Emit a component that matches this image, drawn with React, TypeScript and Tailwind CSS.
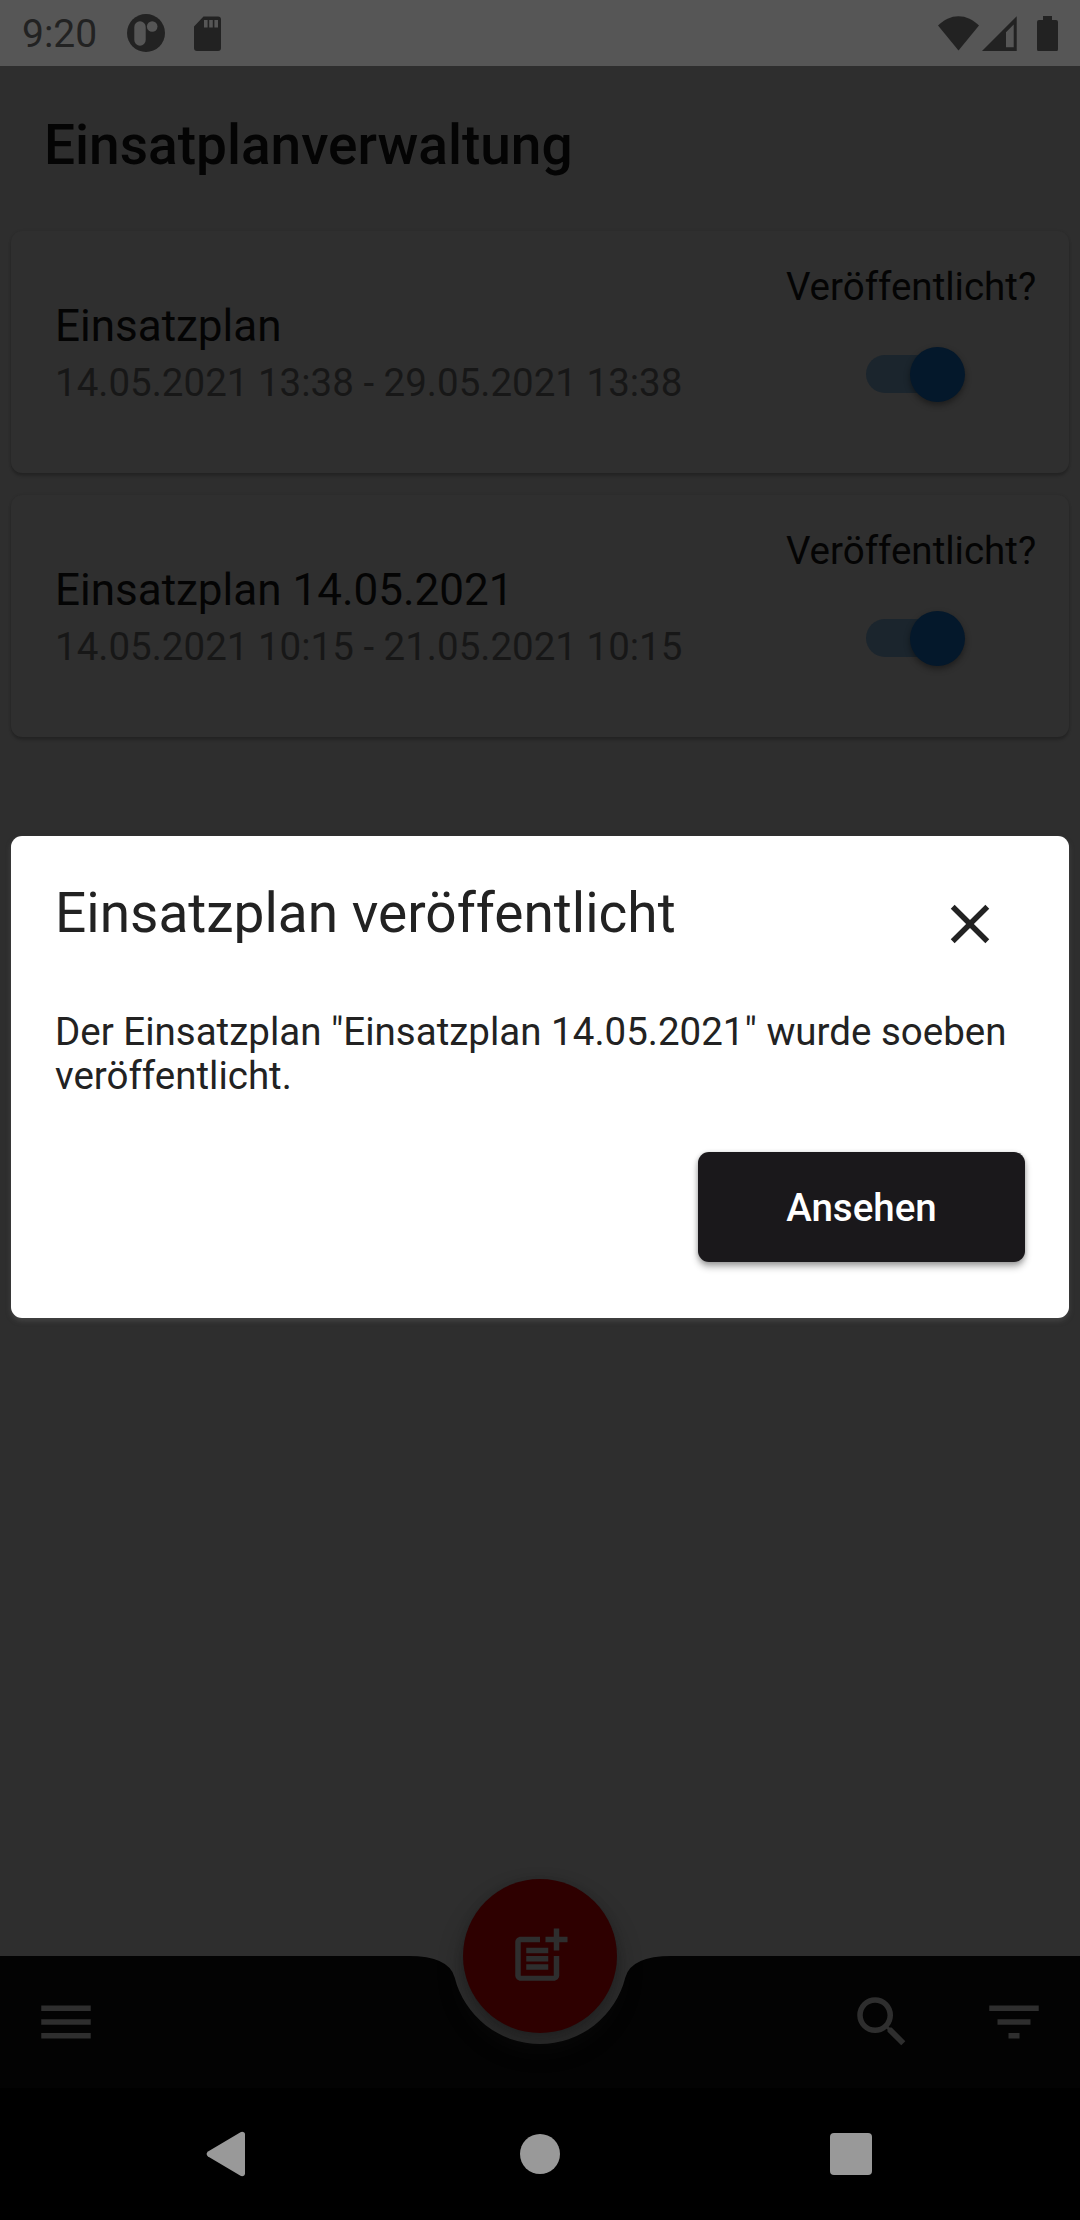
import type { ReactNode } from "react";
import { MdClose, MdFilterList, MdMenu, MdPostAdd, MdSearch } from "react-icons/md";

type Plan = { name: string; period: string };

const plans: Plan[] = [
  { name: "Einsatzplan", period: "14.05.2021 13:38 - 29.05.2021 13:38" },
  { name: "Einsatzplan 14.05.2021", period: "14.05.2021 10:15 - 21.05.2021 10:15" },
];

function StatusBar() {
  return (
    <header className="flex h-[66px] shrink-0 items-center bg-[#565656] px-[22px] text-[#222222]">
      <span className="w-[105px] pt-[3px] text-[39px] leading-[63px]">9:20</span>
      <svg className="h-[38px] w-[38px]" viewBox="0 0 38 38">
        <circle cx="19" cy="19" r="19" fill="#222222" />
        <rect x="7.3" y="7.3" width="11.4" height="24.4" rx="5.7" fill="#565656" />
        <circle cx="25.2" cy="12.5" r="5.3" fill="#565656" />
      </svg>
      <svg className="ml-[28px] h-[35px] w-[28px]" viewBox="0 0 28 35">
        <path d="M10.5 0.5H25a3 3 0 0 1 3 3V32a3 3 0 0 1-3 3H4a3 3 0 0 1-3-3V10.5z" fill="#222222" />
        <path d="M11 4h3.6v7.5H11zM16.2 4h3.6v7.5h-3.6zM21.4 4H25v7.5h-3.6z" fill="#565656" />
      </svg>
      <svg className="ml-auto h-[35px] w-[120px]" viewBox="0 0 120 35" fill="#222222">
        <path d="M0 9.6C5.8 3.6 13 0.2 20.5 0.2S35.2 3.6 41 9.6L20.5 34.5z" />
        <path fillRule="evenodd" d="M44 35 78.7 0.3V35zM68 16.3V31.3h7.7V8.6z" />
        <path d="M105 0h9v4h4a2 2 0 0 1 2 2v27a2.5 2.5 0 0 1-2.5 2.5h-16A2.5 2.5 0 0 1 99 33V6a2 2 0 0 1 2-2h4z" />
      </svg>
    </header>
  );
}

function Switch() {
  return (
    <div className="flex h-[38px] w-[91px] items-center justify-end rounded-full bg-[#1b252d]">
      <div className="-mr-[8px] h-[55px] w-[55px] shrink-0 rounded-full bg-[#04182b] shadow-[0_3px_6px_rgba(0,0,0,0.4)]" />
    </div>
  );
}

function PlanCard({ plan }: { plan: Plan }) {
  return (
    <article className="flex h-[242px] justify-between rounded-[11px] bg-[#2f2f2f] pl-[44px] pr-[33px] shadow-[0_3px_3px_rgba(0,0,0,0.2),0_0_3px_rgba(0,0,0,0.1)]">
      <div className="pt-[69px]">
        <h2 className="text-[44px] leading-[52px] text-[#040404]">{plan.name}</h2>
        <p className="mt-[8px] text-[38.5px] leading-[45px] text-[#171717]">{plan.period}</p>
      </div>
      <div className="flex w-[250px] flex-col items-center pt-[33px]">
        <span className="mb-[46px] whitespace-nowrap text-[38.5px] leading-[45px] text-[#040404]">
          Veröffentlicht?
        </span>
        <Switch />
      </div>
    </article>
  );
}

function IconButton({ label, children }: { label: string; children: ReactNode }) {
  return (
    <button aria-label={label} className="flex h-[132px] w-[132px] items-center justify-center text-[66px] text-[#2e2e2e]">
      {children}
    </button>
  );
}

function BottomBar() {
  return (
    <div className="relative h-[132px] shrink-0">
      <svg className="absolute inset-0 h-full w-full" viewBox="0 0 1080 132">
        <path
          d="M0 0H408Q449.25 0 454.67 21.5A88 88 0 0 0 625.33 21.5Q630.75 0 672 0H1080V132H0z"
          fill="#030303"
        />
      </svg>
      <div className="relative flex">
        <IconButton label="Menü">
          <MdMenu />
        </IconButton>
        <div className="flex-1" />
        <IconButton label="Suchen">
          <MdSearch />
        </IconButton>
        <IconButton label="Filtern">
          <MdFilterList />
        </IconButton>
      </div>
      <button
        aria-label="Einsatzplan hinzufügen"
        className="absolute -top-[77px] left-[463px] flex h-[154px] w-[154px] items-center justify-center rounded-full bg-[#2e0000] text-[66px] text-[#2e2e2e] shadow-[0_14px_24px_rgba(20,20,20,0.4),0_2px_8px_rgba(20,20,20,0.25)]"
      >
        <MdPostAdd />
      </button>
    </div>
  );
}

function SystemNavigation() {
  return (
    <nav className="flex h-[132px] shrink-0 items-center bg-black pl-[206px] pr-[208px] text-[#999999]">
      <svg className="h-[46px] w-[40px]" viewBox="0 0 40 46" fill="currentColor">
        <path d="M2 20.4 34.5 1.2Q36.5 0.3 38.2 1.6Q39 2.3 39 3.5V42.5Q39 43.7 38.2 44.4Q36.5 45.7 34.5 44.8L2 25.6Q-0.8 23 2 20.4z" />
      </svg>
      <div className="ml-[274px] h-[40px] w-[40px] rounded-full bg-[#999999]" />
      <div className="ml-auto h-[42px] w-[42px] rounded-[4px] bg-[#999999]" />
    </nav>
  );
}

function PublishedDialog() {
  return (
    <section
      role="dialog"
      aria-modal="true"
      className="absolute left-[11px] right-[11px] top-[836px] flex h-[482px] flex-col rounded-[11px] bg-white px-[44px] text-[#222222] shadow-[0_3px_5px_rgba(90,90,90,0.5)]"
    >
      <div className="flex items-start justify-between">
        <h2 className="mt-[44px] text-[55px] leading-[66px]">Einsatzplan veröffentlicht</h2>
        <button aria-label="Schließen" className="mr-[22px] mt-[55px] text-[66px]">
          <MdClose />
        </button>
      </div>
      <p className="mt-[53px] w-[975px] text-[38.5px] leading-[44px]">
        Der Einsatzplan "Einsatzplan 14.05.2021" wurde soeben veröffentlicht.
      </p>
      <button className="mt-[54px] h-[110px] w-[327px] self-end rounded-[11px] bg-[#1a181b] pt-[2px] text-[38.5px] font-medium leading-[108px] text-white shadow-[0_5px_7px_rgba(0,0,0,0.3),0_1px_5px_rgba(0,0,0,0.2)]">
        Ansehen
      </button>
    </section>
  );
}

export default function App() {
  return (
    <div className="relative flex h-[2220px] w-[1080px] flex-col overflow-hidden bg-[#2e2e2e] font-['Roboto',sans-serif]">
      <StatusBar />
      <h1 className="ml-[44px] mt-[46px] text-[55px] font-medium leading-[66px] text-[#040404]">Einsatplanverwaltung</h1>
      <main className="mt-[53px] flex flex-1 flex-col gap-[22px] px-[11px]">
        {plans.map((plan) => (
          <PlanCard key={plan.name} plan={plan} />
        ))}
      </main>
      <BottomBar />
      <SystemNavigation />
      <PublishedDialog />
    </div>
  );
}
